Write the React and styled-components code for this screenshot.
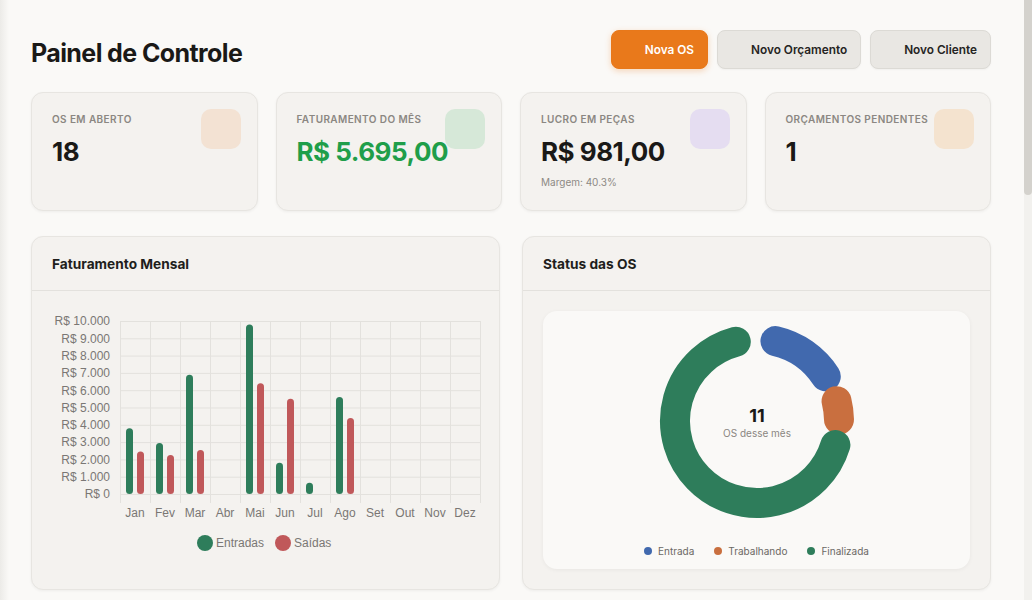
import React from "react";
import styled, { createGlobalStyle } from "styled-components";

const GlobalStyle = createGlobalStyle`
  html, body {
    margin: 0;
    padding: 0;
    height: 100%;
    overflow: hidden;
  }
  body {
    background: #faf9f7;
    font-family: Inter, "Noto Sans", sans-serif;
    color: #1c1b1a;
  }
`;

const Shell = styled.div`
  height: 100vh;
  display: flex;
`;

const Scroller = styled.div`
  flex: 1;
  overflow-y: auto;
  background: linear-gradient(to right, #ecebe8 0, #faf9f7 9px) #faf9f7;
`;

const ScrollRail = styled.div`
  flex: none;
  width: 8px;
  background: #f2f1ee;
`;

const ScrollThumb = styled.div`
  height: 195px;
  border-radius: 0 0 4px 4px;
  background: #d4d2cd;
`;

const Page = styled.main`
  min-height: 1846px;
  box-sizing: border-box;
  padding: 30px 33px 40px 31px;
`;

const Header = styled.header`
  display: flex;
  align-items: center;
  justify-content: space-between;
  height: 39px;
`;

const Title = styled.h1`
  margin: 7px 0 0;
  font-size: 25px;
  font-weight: 700;
  letter-spacing: -0.6px;
  color: #1a1917;
`;

const Actions = styled.div`
  display: flex;
  gap: 9px;
`;

const Button = styled.button`
  height: 39px;
  padding: 0 13px 0 33px;
  border-radius: 8px;
  font-family: Inter, sans-serif;
  font-size: 11.8px;
  font-weight: 600;
  cursor: pointer;
  border: 1px solid ${(p) => (p.$primary ? "#e8781a" : "#dcdad5")};
  background: ${(p) => (p.$primary ? "#e9791b" : "#e9e7e3")};
  color: ${(p) => (p.$primary ? "#ffffff" : "#252422")};
  box-shadow: ${(p) =>
    p.$primary ? "0 2px 6px rgba(232, 120, 26, 0.28)" : "0 1px 2px rgba(0,0,0,0.04)"};
`;

const StatGrid = styled.section`
  margin-top: 23px;
  display: grid;
  grid-template-columns: repeat(4, minmax(0, 1fr));
  gap: 18px;
`;

const StatCard = styled.div`
  height: 119px;
  box-sizing: border-box;
  display: flex;
  align-items: flex-start;
  padding: 16px 16px 0 20px;
  background: #f4f2ef;
  border: 1px solid #e7e5e1;
  border-radius: 12px;
  box-shadow: 0 1px 3px rgba(0, 0, 0, 0.05);
`;

const StatBody = styled.div`
  flex: 1;
  min-width: 0;
  padding-top: 3px;
`;

const StatLabel = styled.div`
  font-size: 10px;
  line-height: 14px;
  font-weight: 600;
  letter-spacing: 0.4px;
  text-transform: uppercase;
  color: #8b8782;
  white-space: nowrap;
`;

const StatValue = styled.div`
  margin-top: 11px;
  font-size: 26px;
  line-height: 30px;
  font-weight: 700;
  letter-spacing: -0.5px;
  color: ${(p) => p.$color || "#1a1917"};
  white-space: nowrap;
`;

const StatNote = styled.div`
  margin-top: 8px;
  font-size: 10px;
  line-height: 14px;
  color: #8d8984;
`;

const StatIcon = styled.div`
  flex: none;
  width: 40px;
  height: 40px;
  border-radius: 10px;
  background: ${(p) => p.$bg};
`;

const ChartGrid = styled.section`
  margin-top: 25px;
  display: grid;
  grid-template-columns: repeat(2, minmax(0, 1fr));
  gap: 22px;
`;

const Card = styled.div`
  height: 354px;
  box-sizing: border-box;
  display: flex;
  flex-direction: column;
  background: #f4f2ef;
  border: 1px solid #e7e5e1;
  border-radius: 12px;
  box-shadow: 0 1px 3px rgba(0, 0, 0, 0.05);
`;

const CardHeader = styled.div`
  height: 53px;
  flex: none;
  display: flex;
  align-items: center;
  padding: 0 20px;
  border-bottom: 1px solid #e3e1dd;
  font-size: 13.7px;
  font-weight: 700;
  color: #1f1e1c;
`;

const CardBody = styled.div`
  flex: 1;
  display: flex;
  flex-direction: column;
  padding: 20px;
`;

const DonutPanel = styled.div`
  flex: 1;
  display: flex;
  flex-direction: column;
  align-items: center;
  background: #faf9f7;
  border-radius: 14px;
  box-shadow: 0 1px 4px rgba(0, 0, 0, 0.05);
`;

const DonutSvg = styled.svg`
  margin-top: 5px;
  display: block;
`;

const Legend = styled.div`
  margin-top: 18px;
  display: flex;
  gap: 20px;
`;

const LegendItem = styled.div`
  display: flex;
  align-items: center;
  gap: 6px;
  font-size: 10px;
  line-height: 14px;
  color: #6b6864;
`;

const Dot = styled.span`
  width: 8px;
  height: 8px;
  border-radius: 50%;
  background: ${(p) => p.$color};
`;

const GREEN = "#2e7d5b";
const RED = "#c0585a";
const BLUE = "#4169ae";
const ORANGE = "#c96f3f";

const months = ["Jan", "Fev", "Mar", "Abr", "Mai", "Jun", "Jul", "Ago", "Set", "Out", "Nov", "Dez"];
const entradas = [3800, 2950, 6900, 0, 9800, 1800, 650, 5600, 0, 0, 0, 0];
const saidas = [2450, 2250, 2550, 0, 6400, 5500, 0, 4400, 0, 0, 0, 0];

function BarChart() {
  const x0 = 68;
  const col = 30;
  const y0 = 183;
  const k = 0.0173;
  const ticks = Array.from({ length: 11 }, (_, i) => i * 1000);
  const fmt = (v) => "R$ " + v.toLocaleString("pt-BR");
  const bar = (v, x, color, key) =>
    v > 0 ? (
      <rect key={key} x={x} y={y0 - v * k} width={7} height={v * k} rx={3.5} fill={color} />
    ) : null;

  return (
    <svg width="427" height="260" style={{ display: "block", overflow: "visible" }}>
      <g stroke="#e3e1dd" strokeWidth="1">
        {Array.from({ length: 13 }, (_, i) => (
          <line key={"v" + i} x1={x0 + i * col + 0.5} x2={x0 + i * col + 0.5} y1={10} y2={192} />
        ))}
        {ticks.map((t) => (
          <line key={"h" + t} x1={x0} x2={x0 + 360} y1={y0 - t * k + 0.5} y2={y0 - t * k + 0.5} />
        ))}
      </g>
      <g fontFamily="'Liberation Sans', Arial, sans-serif" fontSize="12" fill="#7a7774">
        {ticks.map((t) => (
          <text key={"t" + t} x={58} y={y0 - t * k} dy="0.36em" textAnchor="end">
            {fmt(t)}
          </text>
        ))}
        {months.map((m, i) => (
          <text key={m} x={x0 + i * col + 15} y={202} dy="0.36em" textAnchor="middle">
            {m}
          </text>
        ))}
      </g>
      {months.map((m, i) => {
        const c = x0 + i * col + 15;
        return (
          <g key={"b" + m}>
            {bar(entradas[i], c - 9, GREEN, "e")}
            {bar(saidas[i], c + 2, RED, "s")}
          </g>
        );
      })}
      <g fontFamily="'Liberation Sans', Arial, sans-serif" fontSize="12" fill="#7a7774">
        <circle cx={153} cy={232} r={8} fill={GREEN} />
        <text x={164} y={232} dy="0.36em">Entradas</text>
        <circle cx={231} cy={232} r={8} fill={RED} />
        <text x={242} y={232} dy="0.36em">Saídas</text>
      </g>
    </svg>
  );
}

function arcPath(cx, cy, r, a0, a1) {
  const rad = (a) => (a * Math.PI) / 180;
  const sx = cx + r * Math.sin(rad(a0));
  const sy = cy - r * Math.cos(rad(a0));
  const ex = cx + r * Math.sin(rad(a1));
  const ey = cy - r * Math.cos(rad(a1));
  const large = a1 - a0 > 180 ? 1 : 0;
  return `M ${sx} ${sy} A ${r} ${r} 0 ${large} 1 ${ex} ${ey}`;
}

const segments = [
  { label: "Entrada", color: BLUE, from: 13, to: 57 },
  { label: "Trabalhando", color: ORANGE, from: 76, to: 89 },
  { label: "Finalizada", color: GREEN, from: 107, to: 345 },
];

function Donut() {
  const cx = 110;
  const cy = 105;
  return (
    <DonutSvg width="220" height="210">
      {segments.map((s) => (
        <path
          key={s.label}
          d={arcPath(cx, cy, 82, s.from, s.to)}
          stroke={s.color}
          strokeWidth="30"
          strokeLinecap="round"
          fill="none"
        />
      ))}
      <text
        x={cx}
        y={100}
        dy="0.36em"
        textAnchor="middle"
        fontFamily="Inter, sans-serif"
        fontSize="18"
        fontWeight="700"
        fill="#1a1917"
      >
        11
      </text>
      <text
        x={cx}
        y={117}
        dy="0.36em"
        textAnchor="middle"
        fontFamily="Inter, sans-serif"
        fontSize="10"
        fill="#8a8681"
      >
        OS desse mês
      </text>
    </DonutSvg>
  );
}

const stats = [
  { label: "OS em aberto", value: "18", icon: "#f3e2d3" },
  { label: "Faturamento do mês", value: "R$ 5.695,00", color: "#1f9e4a", icon: "#d6e8d8" },
  { label: "Lucro em peças", value: "R$ 981,00", note: "Margem: 40.3%", icon: "#e5ddf1" },
  { label: "Orçamentos pendentes", value: "1", icon: "#f4e3cf" },
];

export default function App() {
  return (
    <>
      <GlobalStyle />
      <Shell>
        <Scroller>
          <Page>
            <Header>
              <Title>Painel de Controle</Title>
              <Actions>
                <Button $primary>Nova OS</Button>
                <Button>Novo Orçamento</Button>
                <Button>Novo Cliente</Button>
              </Actions>
            </Header>

            <StatGrid>
              {stats.map((s) => (
                <StatCard key={s.label}>
                  <StatBody>
                    <StatLabel>{s.label}</StatLabel>
                    <StatValue $color={s.color}>{s.value}</StatValue>
                    {s.note && <StatNote>{s.note}</StatNote>}
                  </StatBody>
                  <StatIcon $bg={s.icon} />
                </StatCard>
              ))}
            </StatGrid>

            <ChartGrid>
              <Card>
                <CardHeader>Faturamento Mensal</CardHeader>
                <CardBody>
                  <BarChart />
                </CardBody>
              </Card>
              <Card>
                <CardHeader>Status das OS</CardHeader>
                <CardBody>
                  <DonutPanel>
                    <Donut />
                    <Legend>
                      {segments.map((s) => (
                        <LegendItem key={s.label}>
                          <Dot $color={s.color} />
                          {s.label}
                        </LegendItem>
                      ))}
                    </Legend>
                  </DonutPanel>
                </CardBody>
              </Card>
            </ChartGrid>
          </Page>
        </Scroller>
        <ScrollRail>
          <ScrollThumb />
        </ScrollRail>
      </Shell>
    </>
  );
}
